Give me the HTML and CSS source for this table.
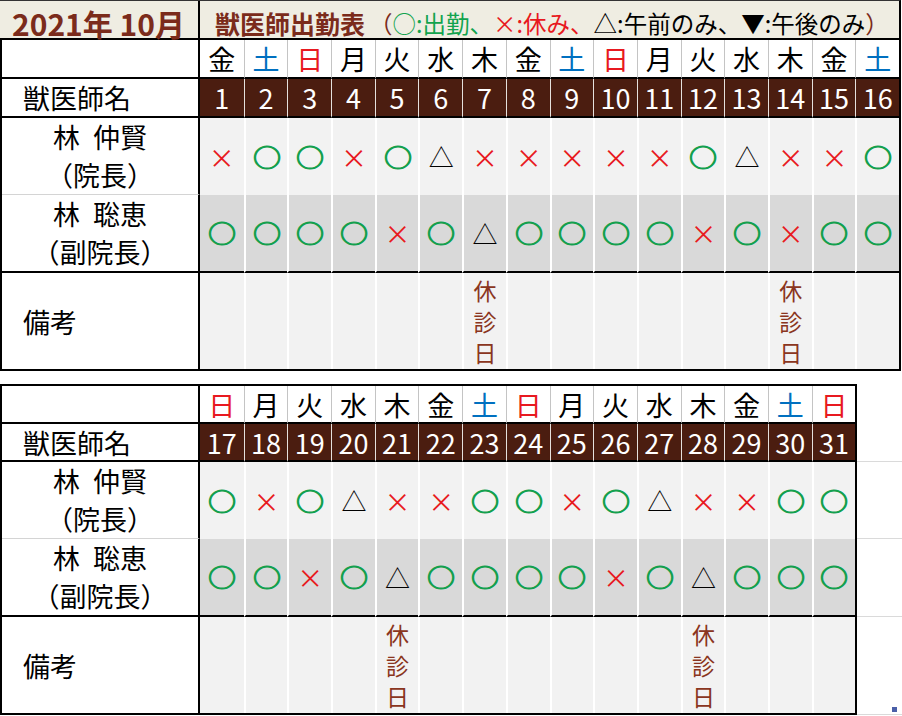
FILE: index.html
```html
<!DOCTYPE html>
<html lang="ja">
<head>
<meta charset="utf-8">
<title>獣医師出勤表 2021年10月</title>
<link rel="stylesheet" href="styles.css">
</head>
<body>
<div class="sheet">
  <div class="title">
    <div class="month">2021年 10月</div>
    <div class="heading"><b>獣医師出勤表</b><span class="brown">（</span><span class="green">○:出勤、</span><span class="red">×:休み、</span><span>△:午前のみ、▼:午後のみ</span><span class="brown">）</span></div>
  </div>

  <div class="tbl top">
    <div class="lbl lbl-wk"></div>
    <div class="c wk">金</div><div class="c wk sat">土</div><div class="c wk sun">日</div><div class="c wk">月</div><div class="c wk">火</div><div class="c wk">水</div><div class="c wk">木</div><div class="c wk">金</div><div class="c wk sat">土</div><div class="c wk sun">日</div><div class="c wk">月</div><div class="c wk">火</div><div class="c wk">水</div><div class="c wk">木</div><div class="c wk">金</div><div class="c wk sat">土</div>

    <div class="lbl lbl-dt">獣医師名</div>
    <div class="c dt">1</div><div class="c dt">2</div><div class="c dt">3</div><div class="c dt">4</div><div class="c dt">5</div><div class="c dt">6</div><div class="c dt">7</div><div class="c dt">8</div><div class="c dt">9</div><div class="c dt">10</div><div class="c dt">11</div><div class="c dt">12</div><div class="c dt">13</div><div class="c dt">14</div><div class="c dt">15</div><div class="c dt">16</div>

    <div class="lbl lbl-r1"><span class="name">林 仲賢</span><span>（院長）</span></div>
    <div class="c r1"><span class="x">×</span></div><div class="c r1"><span class="o">○</span></div><div class="c r1"><span class="o">○</span></div><div class="c r1"><span class="x">×</span></div><div class="c r1"><span class="o">○</span></div><div class="c r1"><span class="t">△</span></div><div class="c r1"><span class="x">×</span></div><div class="c r1"><span class="x">×</span></div><div class="c r1"><span class="x">×</span></div><div class="c r1"><span class="x">×</span></div><div class="c r1"><span class="x">×</span></div><div class="c r1"><span class="o">○</span></div><div class="c r1"><span class="t">△</span></div><div class="c r1"><span class="x">×</span></div><div class="c r1"><span class="x">×</span></div><div class="c r1"><span class="o">○</span></div>

    <div class="lbl lbl-r2"><span class="name">林 聡恵</span><span>（副院長）</span></div>
    <div class="c r2"><span class="o">○</span></div><div class="c r2"><span class="o">○</span></div><div class="c r2"><span class="o">○</span></div><div class="c r2"><span class="o">○</span></div><div class="c r2"><span class="x">×</span></div><div class="c r2"><span class="o">○</span></div><div class="c r2"><span class="t">△</span></div><div class="c r2"><span class="o">○</span></div><div class="c r2"><span class="o">○</span></div><div class="c r2"><span class="o">○</span></div><div class="c r2"><span class="o">○</span></div><div class="c r2"><span class="x">×</span></div><div class="c r2"><span class="o">○</span></div><div class="c r2"><span class="x">×</span></div><div class="c r2"><span class="o">○</span></div><div class="c r2"><span class="o">○</span></div>

    <div class="lbl lbl-nt">備考</div>
    <div class="c nt"></div><div class="c nt"></div><div class="c nt"></div><div class="c nt"></div><div class="c nt"></div><div class="c nt"></div><div class="c nt"><span class="off">休<br>診<br>日</span></div><div class="c nt"></div><div class="c nt"></div><div class="c nt"></div><div class="c nt"></div><div class="c nt"></div><div class="c nt"></div><div class="c nt"><span class="off">休<br>診<br>日</span></div><div class="c nt"></div><div class="c nt"></div>
  </div>

  <div class="lower">
    <div class="tbl bottom">
      <div class="lbl lbl-wk"></div>
      <div class="c wk sun">日</div><div class="c wk">月</div><div class="c wk">火</div><div class="c wk">水</div><div class="c wk">木</div><div class="c wk">金</div><div class="c wk sat">土</div><div class="c wk sun">日</div><div class="c wk">月</div><div class="c wk">火</div><div class="c wk">水</div><div class="c wk">木</div><div class="c wk">金</div><div class="c wk sat">土</div><div class="c wk sun">日</div>

      <div class="lbl lbl-dt">獣医師名</div>
      <div class="c dt">17</div><div class="c dt">18</div><div class="c dt">19</div><div class="c dt">20</div><div class="c dt">21</div><div class="c dt">22</div><div class="c dt">23</div><div class="c dt">24</div><div class="c dt">25</div><div class="c dt">26</div><div class="c dt">27</div><div class="c dt">28</div><div class="c dt">29</div><div class="c dt">30</div><div class="c dt">31</div>

      <div class="lbl lbl-r1"><span class="name">林 仲賢</span><span>（院長）</span></div>
      <div class="c r1"><span class="o">○</span></div><div class="c r1"><span class="x">×</span></div><div class="c r1"><span class="o">○</span></div><div class="c r1"><span class="t">△</span></div><div class="c r1"><span class="x">×</span></div><div class="c r1"><span class="x">×</span></div><div class="c r1"><span class="o">○</span></div><div class="c r1"><span class="o">○</span></div><div class="c r1"><span class="x">×</span></div><div class="c r1"><span class="o">○</span></div><div class="c r1"><span class="t">△</span></div><div class="c r1"><span class="x">×</span></div><div class="c r1"><span class="x">×</span></div><div class="c r1"><span class="o">○</span></div><div class="c r1"><span class="o">○</span></div>

      <div class="lbl lbl-r2"><span class="name">林 聡恵</span><span>（副院長）</span></div>
      <div class="c r2"><span class="o">○</span></div><div class="c r2"><span class="o">○</span></div><div class="c r2"><span class="x">×</span></div><div class="c r2"><span class="o">○</span></div><div class="c r2"><span class="t">△</span></div><div class="c r2"><span class="o">○</span></div><div class="c r2"><span class="o">○</span></div><div class="c r2"><span class="o">○</span></div><div class="c r2"><span class="o">○</span></div><div class="c r2"><span class="x">×</span></div><div class="c r2"><span class="o">○</span></div><div class="c r2"><span class="t">△</span></div><div class="c r2"><span class="o">○</span></div><div class="c r2"><span class="o">○</span></div><div class="c r2"><span class="o">○</span></div>

      <div class="lbl lbl-nt">備考</div>
      <div class="c nt"></div><div class="c nt"></div><div class="c nt"></div><div class="c nt"></div><div class="c nt"><span class="off">休<br>診<br>日</span></div><div class="c nt"></div><div class="c nt"></div><div class="c nt"></div><div class="c nt"></div><div class="c nt"></div><div class="c nt"></div><div class="c nt"><span class="off">休<br>診<br>日</span></div><div class="c nt"></div><div class="c nt"></div><div class="c nt"></div>
    </div>
    <div class="filler">
      <div class="gl gl1"></div>
      <div class="gl gl2"></div>
      <div class="gl gl3"></div>
      <div class="gl gl4"><span class="handle"></span></div>
    </div>
  </div>
</div>
</body>
</html>
```

FILE: styles.css
```css
* { box-sizing: border-box; }
html, body { margin: 0; padding: 0; background: #fff; }
body {
  font-family: "Noto Sans CJK JP", "Noto Sans", sans-serif;
  color: #000;
}
.sheet { width: 902px; }

/* title row */
.title {
  width: 901px;
  height: 40px;
  display: grid;
  grid-template-columns: 200px 1fr;
  background: #efede2;
  border-top: 1px solid #333;
  border-bottom: 2px solid #000;
  border-right: 2px solid #000;
}
.month {
  border-right: 2px solid #000;
  font-size: 30px;
  font-weight: 700;
  color: #7b2b1b;
  padding-left: 12px;
  display: flex;
  align-items: center;
  white-space: nowrap;
}
.heading {
  font-size: 23.5px;
  padding-left: 15px;
  display: flex;
  align-items: center;
  white-space: nowrap;
}
.heading b { font-weight: 700; color: #7b2b1b; font-size: 25px; margin-right: 4px; }
.brown { color: #7b2b1b; }
.green { color: #12a34e; }
.red { color: #e81920; }

/* grid tables */
.tbl {
  display: grid;
  border: 2px solid #000;
  font-size: 27px;
}
.tbl.top {
  width: 901px;
  border-top: none;
  grid-template-columns: 198px repeat(16, 1fr);
  grid-template-rows: 39px 39px 77px 78px 96px;
}
.tbl.bottom {
  flex: none;
  grid-template-columns: 198px repeat(15, 43.6875px);
  grid-template-rows: 38px 38px 77px 78px 96px;
}

.lbl {
  background: #fff;
  border-right: 2px solid #000;
  display: flex;
  align-items: center;
}
.lbl-wk, .lbl-dt, .lbl-r2 { border-bottom: 2px solid #000; }
.lbl-r1 { border-bottom: 1px solid #d4d4d4; }
.lbl-dt, .lbl-nt { padding-left: 21px; }
.lbl-r1, .lbl-r2 {
  flex-direction: column;
  justify-content: center;
  line-height: 38px;
}
.name { word-spacing: 7px; }

.c {
  display: flex;
  align-items: center;
  justify-content: center;
  line-height: 1;
}
.wk {
  background: #fff;
  border-left: 1px solid #c4c4c4;
  border-bottom: 2px solid #000;
}
.sat { color: #0070c0; }
.sun { color: #e81920; }
.dt {
  background: #4b1d10;
  color: #fff;
  border-left: 1px solid #e6e0dc;
  border-bottom: 2px solid #000;
}
.r1 {
  background: #f2f2f2;
  border-left: 2px solid #fff;
}
.r2 {
  background: #d9d9d9;
  border-left: 2px solid #fff;
  border-bottom: 2px solid #000;
}
.nt {
  background: #f2f2f2;
  border-left: 2px solid #fff;
}
.lbl + .c { border-left: none; }

.o {
  display: inline-block;
  color: #14a04e;
  font-size: 26px;
  -webkit-text-stroke: 1.1px #14a04e;
  transform: scale(1.08, 0.95);
}
.x { color: #e81920; font-size: 26px; }
.t { color: #000; font-size: 25px; }

.off {
  color: #8a3520;
  font-size: 23px;
  line-height: 31px;
  text-align: center;
}

/* lower block */
.lower {
  display: flex;
  margin-top: 13px;
}
.filler {
  flex: 1;
  display: flex;
  flex-direction: column;
}
.gl { border-bottom: 1px solid #dadada; position: relative; }
.gl1 { height: 78px; }
.gl2 { height: 77px; }
.gl3 { height: 78px; }
.gl4 { height: 98px; }
.handle {
  position: absolute;
  right: 5px;
  bottom: 2px;
  width: 5px;
  height: 5px;
  background: #4a5fa8;
}
```
